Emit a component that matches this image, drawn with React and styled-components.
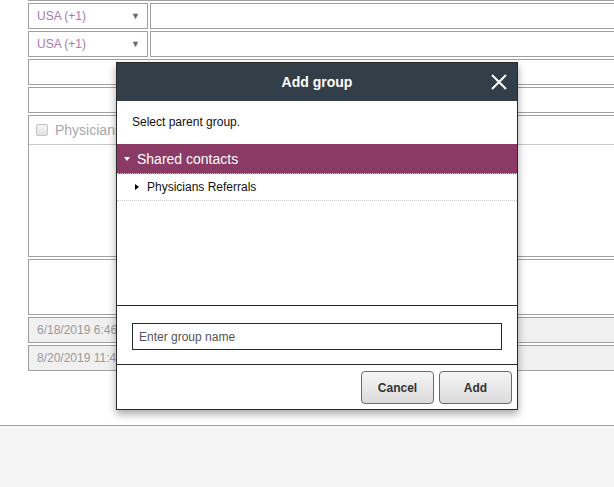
import React from "react";
import styled, { createGlobalStyle } from "styled-components";

const GlobalStyle = createGlobalStyle`
  html, body {
    margin: 0;
    padding: 0;
    background: #fff;
    overflow: hidden;
  }
  body {
    font-family: "Liberation Sans", Arial, sans-serif;
  }
`;

const Page = styled.div`
  position: relative;
  width: 614px;
  height: 487px;
  overflow: hidden;
  display: flex;
  flex-direction: column;
`;

const Form = styled.div`
  flex: 0 0 450px;
  padding-left: 28px;
  display: flex;
  flex-direction: column;
  gap: 2px;
  margin-top: -25px;
`;

const Row = styled.div`
  display: flex;
  gap: 2px;
  width: 620px;
`;

const Field = styled.div`
  box-sizing: border-box;
  height: ${(p) => p.$h || 26}px;
  flex: ${(p) => (p.$w ? `0 0 ${p.$w}px` : "1")};
  border: 1px solid #a0a0a0;
  background: ${(p) => (p.$muted ? "#f0f0f0" : "#fff")};
  display: flex;
  align-items: center;
  padding: 0 8px;
  font-size: 12px;
  color: ${(p) => (p.$muted ? "#9a9a9a" : "#333")};
  white-space: nowrap;
  overflow: hidden;
`;

const SelectText = styled.span`
  flex: 1;
  font-size: 12px;
  color: #a57bb0;
`;

const Caret = styled.span`
  font-size: 9px;
  color: #666;
  margin-right: -1px;
`;

const ListBox = styled.div`
  box-sizing: border-box;
  height: 142px;
  width: 620px;
  border: 1px solid #a0a0a0;
`;

const ListHead = styled.div`
  height: 28px;
  border-bottom: 1px solid #c8c8c8;
  display: flex;
  align-items: center;
  padding-left: 7px;
  gap: 7px;
  font-size: 14px;
  color: #a8a8a8;
`;

const Check = styled.span`
  box-sizing: border-box;
  width: 12px;
  height: 12px;
  border: 1px solid #c4c4c4;
  border-radius: 2px;
  background: linear-gradient(#f4f4f4, #e2e2e2);
`;

const Footer = styled.div`
  flex: 1;
  border-top: 1px solid #a0a0a0;
  background: #f5f5f5;
`;

const Dialog = styled.div`
  position: absolute;
  left: 116px;
  top: 62px;
  width: 400px;
  border: 1px solid #2a2a2a;
  background: #fff;
  box-shadow: 0 4px 8px rgba(0, 0, 0, 0.35);
  display: flex;
  flex-direction: column;
`;

const Header = styled.div`
  position: relative;
  height: 38px;
  background: #323e48;
  display: flex;
  align-items: center;
  justify-content: center;
  color: #fff;
  font-weight: bold;
  font-size: 14px;
`;

const Close = styled.svg`
  position: absolute;
  right: 10px;
  top: 11px;
`;

const Body = styled.div`
  box-sizing: border-box;
  height: 205px;
  border-bottom: 1px solid #2a2a2a;
  padding-top: 14px;
`;

const Hint = styled.div`
  font-size: 12px;
  line-height: 14px;
  color: #111;
  padding-left: 15px;
  margin-bottom: 15px;
`;

const TreeRow = styled.div`
  height: ${(p) => (p.$root ? 29 : 26)}px;
  display: flex;
  align-items: center;
  gap: ${(p) => (p.$root ? 7 : 8)}px;
  padding-left: ${(p) => (p.$root ? 7 : 18)}px;
  background: ${(p) => (p.$root ? "#8a3a64" : "#fff")};
  color: ${(p) => (p.$root ? "#fff" : "#111")};
  font-size: ${(p) => (p.$root ? 14 : 12)}px;
  border-bottom: 1px dotted ${(p) => (p.$root ? "#d9b8ca" : "#c8c8c8")};
`;

const Tri = styled.span`
  width: 0;
  height: 0;
  ${(p) =>
    p.$down
      ? `border-left: 3.5px solid transparent; border-right: 3.5px solid transparent; border-top: 4px solid #fff;`
      : `border-top: 3.5px solid transparent; border-bottom: 3.5px solid transparent; border-left: 4px solid #000;`}
`;

const InputArea = styled.div`
  padding: 17px 15px 14px 15px;
  border-bottom: 1px solid #2a2a2a;
`;

const NameInput = styled.div`
  box-sizing: border-box;
  height: 27px;
  border: 1px solid #2a2a2a;
  display: flex;
  align-items: center;
  padding-left: 6px;
  font-size: 12px;
  color: #555;
`;

const Actions = styled.div`
  display: flex;
  justify-content: flex-end;
  gap: 5px;
  padding: 6px 5px 5px;
`;

const Button = styled.div`
  box-sizing: border-box;
  width: 73px;
  height: 33px;
  border: 1px solid #6a6a6a;
  border-radius: 4px;
  background: linear-gradient(#f6f6f6, #dadada);
  display: flex;
  align-items: center;
  justify-content: center;
  font-size: 12px;
  font-weight: bold;
  color: #333;
`;

const Phone = () => (
  <Row>
    <Field $w={120}>
      <SelectText>USA (+1)</SelectText>
      <Caret>▼</Caret>
    </Field>
    <Field />
  </Row>
);

export default function App() {
  return (
    <Page>
      <GlobalStyle />
      <Form>
        <Row>
          <Field />
        </Row>
        <Phone />
        <Phone />
        <Row>
          <Field />
        </Row>
        <Row>
          <Field />
        </Row>
        <ListBox>
          <ListHead>
            <Check />
            Physicians Referrals
          </ListHead>
        </ListBox>
        <Row>
          <Field $h={56} />
        </Row>
        <Row>
          <Field $muted>6/18/2019 6:46 PM</Field>
        </Row>
        <Row>
          <Field $muted>8/20/2019 11:46 AM</Field>
        </Row>
      </Form>
      <Footer />
      <Dialog>
        <Header>
          Add group
          <Close width="16" height="16" viewBox="0 0 16 16">
            <path d="M1 1L15 15M15 1L1 15" stroke="#fff" strokeWidth="2" />
          </Close>
        </Header>
        <Body>
          <Hint>Select parent group.</Hint>
          <TreeRow $root>
            <Tri $down />
            Shared contacts
          </TreeRow>
          <TreeRow>
            <Tri />
            Physicians Referrals
          </TreeRow>
        </Body>
        <InputArea>
          <NameInput>Enter group name</NameInput>
        </InputArea>
        <Actions>
          <Button>Cancel</Button>
          <Button>Add</Button>
        </Actions>
      </Dialog>
    </Page>
  );
}
